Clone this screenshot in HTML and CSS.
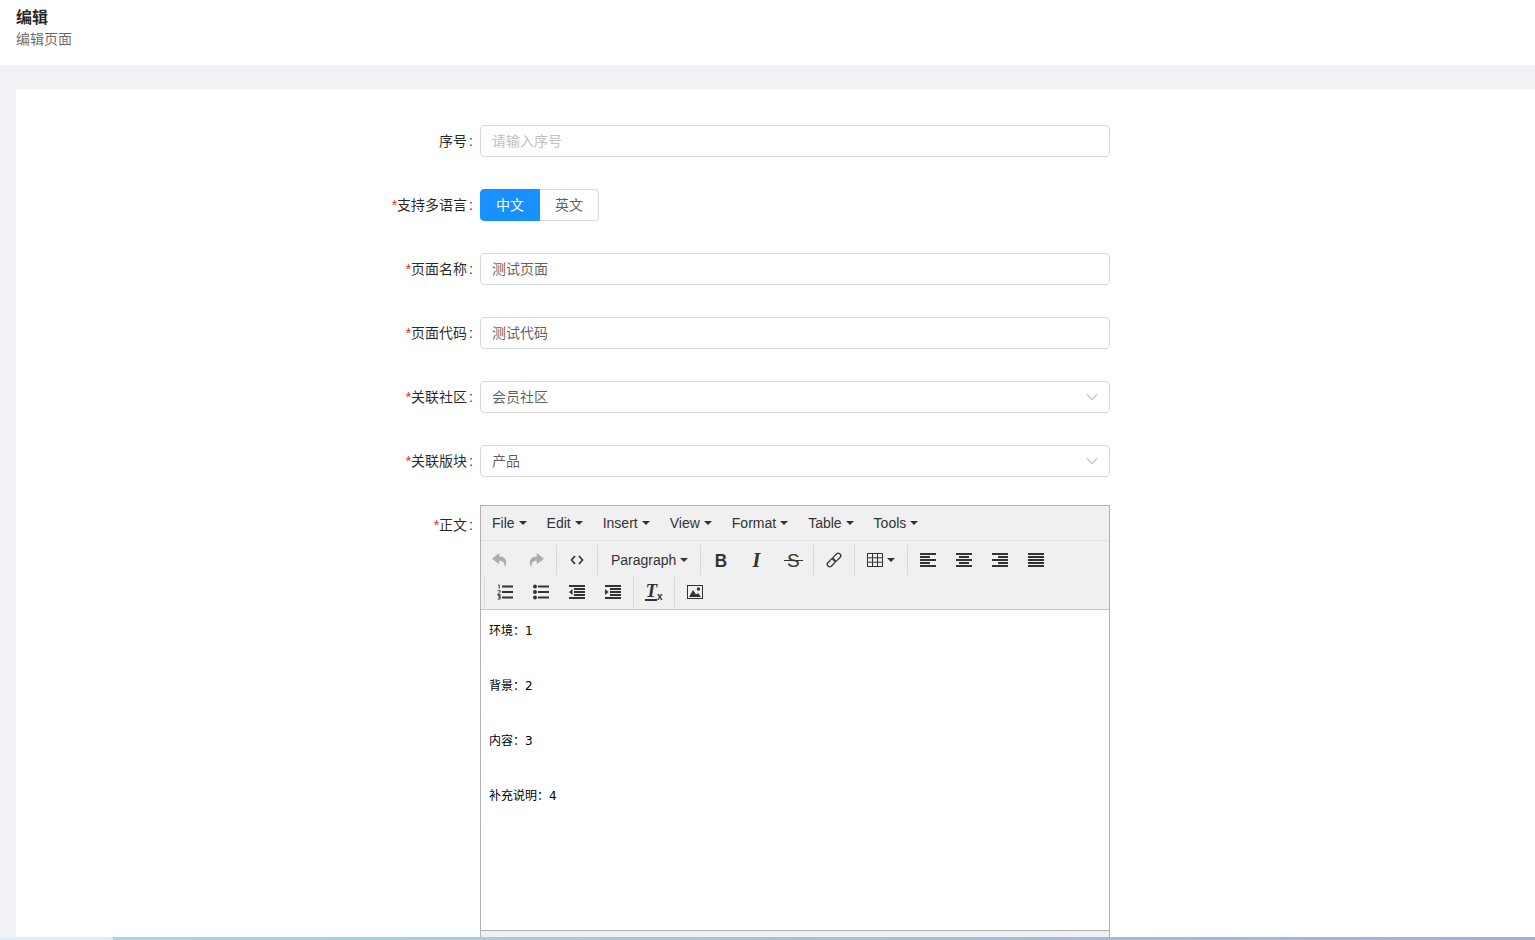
FILE: index.html
```html
<!DOCTYPE html>
<html lang="zh">
<head>
<meta charset="utf-8">
<title>编辑</title>
<link rel="stylesheet" href="styles.css">
</head>
<body>
<header class="page-head">
  <h1 class="page-title">编辑</h1>
  <p class="page-sub">编辑页面</p>
</header>
<main class="page-main">
  <form class="card">
    <div class="row">
      <div class="label">序号</div>
      <div class="control"><div class="input placeholder">请输入序号</div></div>
    </div>
    <div class="row">
      <div class="label"><span class="req">*</span>支持多语言</div>
      <div class="control radio-group">
        <div class="radio active">中文</div>
        <div class="radio">英文</div>
      </div>
    </div>
    <div class="row">
      <div class="label"><span class="req">*</span>页面名称</div>
      <div class="control"><div class="input">测试页面</div></div>
    </div>
    <div class="row">
      <div class="label"><span class="req">*</span>页面代码</div>
      <div class="control"><div class="input">测试代码</div></div>
    </div>
    <div class="row">
      <div class="label"><span class="req">*</span>关联社区</div>
      <div class="control"><div class="input select"><span>会员社区</span><svg class="chev" viewBox="0 0 12 8"><path d="M1 1.5 6 6.5 11 1.5" fill="none" stroke="#bfbfbf" stroke-width="1.1"/></svg></div></div>
    </div>
    <div class="row before-editor">
      <div class="label"><span class="req">*</span>关联版块</div>
      <div class="control"><div class="input select"><span>产品</span><svg class="chev" viewBox="0 0 12 8"><path d="M1 1.5 6 6.5 11 1.5" fill="none" stroke="#bfbfbf" stroke-width="1.1"/></svg></div></div>
    </div>
    <div class="row editor-row">
      <div class="label editor-label"><span class="req">*</span>正文</div>
      <div class="control">
        <div class="editor">
          <div class="menubar">
            <div class="menu-item">File<i class="caret"></i></div>
            <div class="menu-item">Edit<i class="caret"></i></div>
            <div class="menu-item">Insert<i class="caret"></i></div>
            <div class="menu-item">View<i class="caret"></i></div>
            <div class="menu-item">Format<i class="caret"></i></div>
            <div class="menu-item">Table<i class="caret"></i></div>
            <div class="menu-item">Tools<i class="caret"></i></div>
          </div>
          <div class="toolbar">
            <div class="tool-row">
              <div class="group first">
                <div class="btn"><svg class="ico" viewBox="1 1 14.500 14.500"><path fill="#adadad" d="M7.500 2 1 7.200 7.500 12V9c3 0 5 1.500 5 6C15.500 9.500 13.500 5 7.500 5z"/></svg></div>
                <div class="btn"><svg class="ico" viewBox=".5 1 14.500 14.500"><path fill="#adadad" d="M8.500 2 15 7.200 8.500 12V9c-3 0-5 1.500-5 6C.5 9.500 2.500 5 8.500 5z"/></svg></div>
              </div>
              <div class="group">
                <div class="btn"><svg class="ico" viewBox="0 0 16 16"><path fill="none" stroke="#333" stroke-width="1.700" d="M6 4 2.500 8 6 12M10 4l3.500 4-3.500 4"/></svg></div>
              </div>
              <div class="group">
                <div class="btn select-btn">Paragraph<i class="caret"></i></div>
              </div>
              <div class="group">
                <div class="btn"><span class="glyph bold">B</span></div>
                <div class="btn"><span class="glyph ital">I</span></div>
                <div class="btn"><span class="glyph strike">S</span></div>
              </div>
              <div class="group">
                <div class="btn"><svg class="ico" viewBox="0 0 16 16"><g fill="none" stroke="#333" stroke-width="1.300"><rect x="-2.500" y="-4.500" width="5" height="9" rx="2.500" transform="translate(10.800 5.200) rotate(45)"/><rect x="-2.500" y="-4.500" width="5" height="9" rx="2.500" transform="translate(5.200 10.800) rotate(45)"/></g></svg></div>
              </div>
              <div class="group">
                <div class="btn table-btn"><svg class="ico" viewBox="0 0 16 14"><path fill="none" stroke="#333" d="M.5.500h15v13H.5zM.5 4.800h15M.5 9.200h15M5.500.500v13M10.500.500v13"/></svg><i class="caret"></i></div>
              </div>
              <div class="group">
                <div class="btn"><svg class="ico align" viewBox="0 0 16 14"><path fill="#333" d="M0 0h16v2H0zM0 3h10v2H0zM0 6h16v2H0zM0 9h10v2H0zM0 12h16v2H0z"/></svg></div>
                <div class="btn"><svg class="ico align" viewBox="0 0 16 14"><path fill="#333" d="M0 0h16v2H0zM3 3h10v2H3zM0 6h16v2H0zM3 9h10v2H3zM0 12h16v2H0z"/></svg></div>
                <div class="btn"><svg class="ico align" viewBox="0 0 16 14"><path fill="#333" d="M0 0h16v2H0zM6 3h10v2H6zM0 6h16v2H0zM6 9h10v2H6zM0 12h16v2H0z"/></svg></div>
                <div class="btn"><svg class="ico align" viewBox="0 0 16 14"><path fill="#333" d="M0 0h16v2H0zM0 3h16v2H0zM0 6h16v2H0zM0 9h16v2H0zM0 12h16v2H0z"/></svg></div>
              </div>
            </div>
            <div class="tool-row second">
              <div class="group">
                <div class="btn"><svg class="ico" viewBox="0 0 16 16"><path fill="#333" d="M5 1.500h11v2H5zM5 7h11v2H5zM5 12.500h11v2H5z"/><path fill="none" stroke="#333" stroke-width=".9" d="M1 1.300 2.200.800v4M.6 6.700h2.600v1.500L.8 10v.6h2.600M.7 11.500h2.500v1.700H1.500h1.700v1.900H.7"/></svg></div>
                <div class="btn"><svg class="ico" viewBox="0 0 16 16"><path fill="#333" d="M5 1.500h11v2H5zM5 7h11v2H5zM5 12.500h11v2H5z"/><circle cx="2" cy="2.500" r="2" fill="#333"/><circle cx="2" cy="8" r="2" fill="#333"/><circle cx="2" cy="13.500" r="2" fill="#333"/></svg></div>
                <div class="btn"><svg class="ico" viewBox="0 0 16 14"><path fill="#333" d="M0 0h16v2H0zM5 3h11v2H5zM5 6h11v2H5zM5 9h11v2H5zM0 12h16v2H0zM3.500 4v6L0 7z"/></svg></div>
                <div class="btn"><svg class="ico" viewBox="0 0 16 14"><path fill="#333" d="M0 0h16v2H0zM5 3h11v2H5zM5 6h11v2H5zM5 9h11v2H5zM0 12h16v2H0zM0 4v6l3.500-3z"/></svg></div>
              </div>
              <div class="group">
                <div class="btn"><span class="glyph clear">T<small>x</small></span></div>
              </div>
              <div class="group">
                <div class="btn"><svg class="ico" viewBox="0 0 16 14"><path fill="#333" d="M0 0h16v14H0zM1 1v12h14V1z"/><path fill="#333" d="M2 12 6 5l3 4.500L11 8l3 4z"/><circle cx="11.500" cy="4" r="1.700" fill="#333"/></svg></div>
              </div>
            </div>
          </div>
          <div class="content">
            <p>环境：1</p>
            <p>背景：2</p>
            <p>内容：3</p>
            <p>补充说明：4</p>
          </div>
          <div class="statusbar"></div>
        </div>
      </div>
    </div>
  </form>
</main>
<div class="progress"><div class="progress-head"></div></div>
</body>
</html>
```
FILE: styles.css
```css
* { box-sizing: border-box; }
html, body { margin: 0; height: 100%; overflow: hidden; }
body {
  font-family: "Liberation Sans", "Noto Sans CJK SC", sans-serif;
  font-size: 14px;
  color: rgba(0, 0, 0, .65);
  background: #f0f2f5;
}
.page-head { height: 65px; padding: 7px 16px 0; background: #fff; }
.page-title { margin: 0; font-size: 16px; line-height: 21px; font-weight: 700; color: rgba(0, 0, 0, .85); }
.page-sub { margin: 0; line-height: 22px; color: rgba(0, 0, 0, .6); }
.page-main { height: 875px; padding: 24px 0 0 16px; overflow: hidden; }
.card { height: 851px; background: #fff; padding-top: 36px; overflow: hidden; }
.row { display: flex; margin-bottom: 32px; }
.row.before-editor { margin-bottom: 28px; }
.row.editor-row { margin-bottom: 0; }
.label { width: 464px; flex: none; text-align: right; line-height: 32px; color: rgba(0, 0, 0, .85); }
.label::after { content: ":"; margin: 0 7px 0 2px; }
.req { color: #f5222d; }
.control { width: 630px; flex: none; }
.input {
  display: flex; align-items: center; justify-content: space-between;
  height: 32px; padding: 0 11px 2px;
  background: #fff; border: 1px solid #d9d9d9; border-radius: 4px;
  color: rgba(0, 0, 0, .65);
}
.placeholder { color: #bfbfbf; }
.chev { width: 12px; height: 8px; margin-top: 2px; }
.radio-group { display: flex; }
.radio {
  height: 32px; line-height: 30px; padding: 0 15px;
  border: 1px solid #d9d9d9; border-left-width: 0;
  border-radius: 0 4px 4px 0; background: #fff;
}
.radio.active {
  background: #1890ff; border: 1px solid #1890ff; border-radius: 4px 0 0 4px; color: #fff;
}
.editor-label { line-height: 20px; padding-top: 10px; }
.editor { border: 1px solid #b2b2b2; border-bottom: 0; background: #f0f0f0; color: #333; }
.menubar { display: flex; height: 35px; padding-left: 1px; align-items: center; border-bottom: 1px solid #e2e2e2; }
.menu-item { display: flex; align-items: center; padding: 0 10px; }
.caret {
  width: 0; height: 0; margin-left: 4px;
  border: 4px solid transparent; border-top-color: #333; border-bottom-width: 0;
}
.toolbar { padding: 4px 0 2px 1px; border-bottom: 1px solid #c5c5c5; }
.tool-row { display: flex; height: 30px; }
.tool-row.second { margin: 2px 0 0 2px; }
.group { display: flex; margin-right: 2px; padding-left: 2px; border-left: 1px solid #d9d9d9; }
.group.first { padding-left: 0; border-left: 0; }
.btn { display: flex; align-items: center; justify-content: center; width: 36px; height: 30px; }
.select-btn { width: auto; padding: 0 10px 0 11px; }
.table-btn { width: 48px; }
.ico { display: block; width: 16px; height: 16px; }
.ico.align { height: 14px; }
.glyph { color: #333; line-height: 1; }
.bold { font-size: 19px; font-weight: 700; margin-right: 2px; transform: scaleX(.9); }
.ital { font-family: "Liberation Serif", serif; font-size: 20px; font-style: italic; font-weight: 700; margin-right: 2px; }
.strike { position: relative; font-size: 19px; }
.strike::after {
  content: ""; position: absolute; left: -3px; right: -3px; top: 9px;
  height: 1.500px; background: #333;
}
.clear {
  font-family: "Liberation Serif", serif; font-size: 19px; font-style: italic; font-weight: 700;
  padding: 0 0 1px 0; border-bottom: 2px solid #333; line-height: 15px; height: 18px;
  border-image: linear-gradient(to right, #333 65%, transparent 65%) 1;
}
.clear small { font-family: "Liberation Sans", sans-serif; font-size: 10px; font-style: normal; vertical-align: -3px; }
.content {
  height: 321px; padding: 12px 8px 0; background: #fff;
  border-bottom: 1px solid #b2b2b2;
  font-family: "DejaVu Sans", "Noto Sans CJK SC", sans-serif;
  font-size: 12px; color: #000;
}
.content p { margin: 0 0 36px; line-height: 19px; }
.statusbar { height: 30px; background: #f0f0f0; }
.progress {
  position: fixed; left: 0; right: 0; bottom: 0; height: 3px;
  background: linear-gradient(to right, #a3d9ec, #a2aedb);
}
.progress-head { width: 113px; height: 3px; background: #dcf0f7; }
```
